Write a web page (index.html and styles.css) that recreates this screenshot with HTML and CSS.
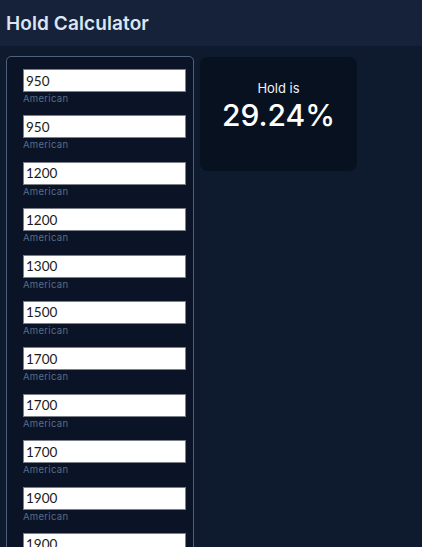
FILE: index.html
```html
<!DOCTYPE html>
<html>
<head>
<meta charset="utf-8">
<link rel="stylesheet" href="styles.css">
</head>
<body>
<header class="topbar"><h1 class="title">Hold Calculator</h1></header>
<main class="content">
  <section class="panel">
    <div class="field"><input class="odds" value="950"><span class="label">American</span></div>
    <div class="field"><input class="odds" value="950"><span class="label">American</span></div>
    <div class="field"><input class="odds" value="1200"><span class="label">American</span></div>
    <div class="field"><input class="odds" value="1200"><span class="label">American</span></div>
    <div class="field"><input class="odds" value="1300"><span class="label">American</span></div>
    <div class="field"><input class="odds" value="1500"><span class="label">American</span></div>
    <div class="field"><input class="odds" value="1700"><span class="label">American</span></div>
    <div class="field"><input class="odds" value="1700"><span class="label">American</span></div>
    <div class="field"><input class="odds" value="1700"><span class="label">American</span></div>
    <div class="field"><input class="odds" value="1900"><span class="label">American</span></div>
    <div class="field"><input class="odds" value="1900"><span class="label">American</span></div>
  </section>
  <section class="result">
    <div class="result-label">Hold is</div>
    <div class="result-value">29.24%</div>
  </section>
</main>
</body>
</html>
```
FILE: styles.css
```css
html, body {
  margin: 0;
  padding: 0;
  height: 100%;
  overflow: hidden;
}
body {
  background: #0e1a2d;
  font-family: Inter, "Noto Sans", sans-serif;
}
.topbar {
  height: 46px;
  background: #16213a;
  display: flex;
  align-items: center;
  padding-left: 6px;
}
.title {
  margin: 0;
  font-size: 19px;
  font-weight: 600;
  color: #dbe5f4;
  letter-spacing: 0.1px;
}
.content {
  display: flex;
  align-items: flex-start;
  gap: 6px;
  padding: 10px 0 0 6px;
}
.panel {
  border: 1px solid #51607a;
  border-radius: 5px;
  background: #0a1426;
  padding: 12px 0 0 16px;
  box-sizing: border-box;
  width: 188px;
  display: flex;
  flex-direction: column;
  gap: 10.4px;
}
.field {
  display: flex;
  flex-direction: column;
}
.odds {
  width: 163px;
  height: 23px;
  box-sizing: border-box;
  border: 1px solid #7a7f88;
  background: #ffffff;
  padding: 0 2px;
  margin: 0;
  font-family: Lato, "Noto Sans", sans-serif;
  font-size: 13.5px;
  color: #1a1a1a;
  outline: none;
}
.label {
  font-size: 9.5px;
  color: #5b6c86;
  height: 13px;
  line-height: 13px;
  letter-spacing: 0.3px;
}
.result {
  width: 157px;
  height: 114px;
  margin-top: 1px;
  background: #08111f;
  border-radius: 8px;
  display: flex;
  flex-direction: column;
  align-items: center;
  padding-top: 22px;
  box-sizing: border-box;
  color: #ffffff;
}
.result-label {
  font-size: 13px;
  line-height: 18px;
  color: #eef2f8;
}
.result-value {
  font-size: 30px;
  line-height: 36px;
  font-weight: 500;
}
```
